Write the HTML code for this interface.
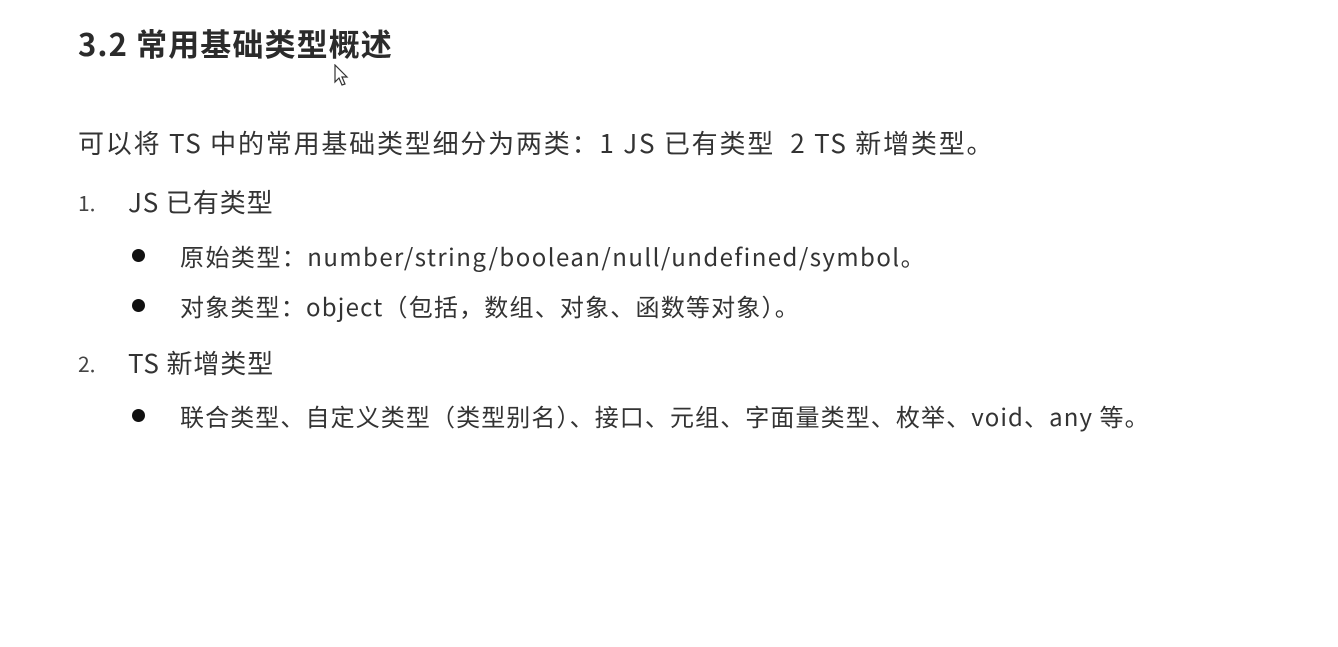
<!DOCTYPE html>
<html><head><meta charset="utf-8"><style>
body{margin:0;width:1338px;height:647px;background:#fff;position:relative;overflow:hidden;font-family:"Noto Sans CJK SC","Liberation Sans",sans-serif;color:#333}
.a{position:absolute;white-space:nowrap;line-height:1}
.t{font-size:31px;font-weight:bold;left:78px;top:27px;color:#2b2b2b;letter-spacing:1.1px}
.p{font-size:26px;left:78px;top:130px;letter-spacing:1.8px}
.n{font-size:21px;left:78px;color:#444}
.h{font-size:26px;left:128px;letter-spacing:0.9px}
.b{font-size:24px;left:180px;letter-spacing:1.3px}
.d{position:absolute;left:132px;width:13px;height:13px;border-radius:50%;background:#111}
</style></head><body>
<div class="a t">3.2 常用基础类型概述</div>
<svg style="position:absolute;left:334px;top:64px" width="16" height="24" viewBox="0 0 16 24"><path d="M1 1 L1 18 L5 14 L8 21 L11 20 L8 13 L13 13 Z" fill="#fff" stroke="#333" stroke-width="1.2"/></svg>
<div class="a p">可以将 TS 中的常用基础类型细分为两类：1 JS 已有类型&nbsp; 2 TS 新增类型。</div>
<div class="a n" style="top:193px">1.</div>
<div class="a h" style="top:189px">JS 已有类型</div>
<div class="d" style="top:249px"></div>
<div class="a b" style="top:244px;letter-spacing:1.45px">原始类型：number/string/boolean/null/undefined/symbol。</div>
<div class="d" style="top:299px"></div>
<div class="a b" style="top:294px;letter-spacing:1.2px">对象类型：object（包括，数组、对象、函数等对象）。</div>
<div class="a n" style="top:354px">2.</div>
<div class="a h" style="top:350px">TS 新增类型</div>
<div class="d" style="top:409px"></div>
<div class="a b" style="top:404px;letter-spacing:1.1px">联合类型、自定义类型（类型别名）、接口、元组、字面量类型、枚举、void、any 等。</div>
</body></html>
